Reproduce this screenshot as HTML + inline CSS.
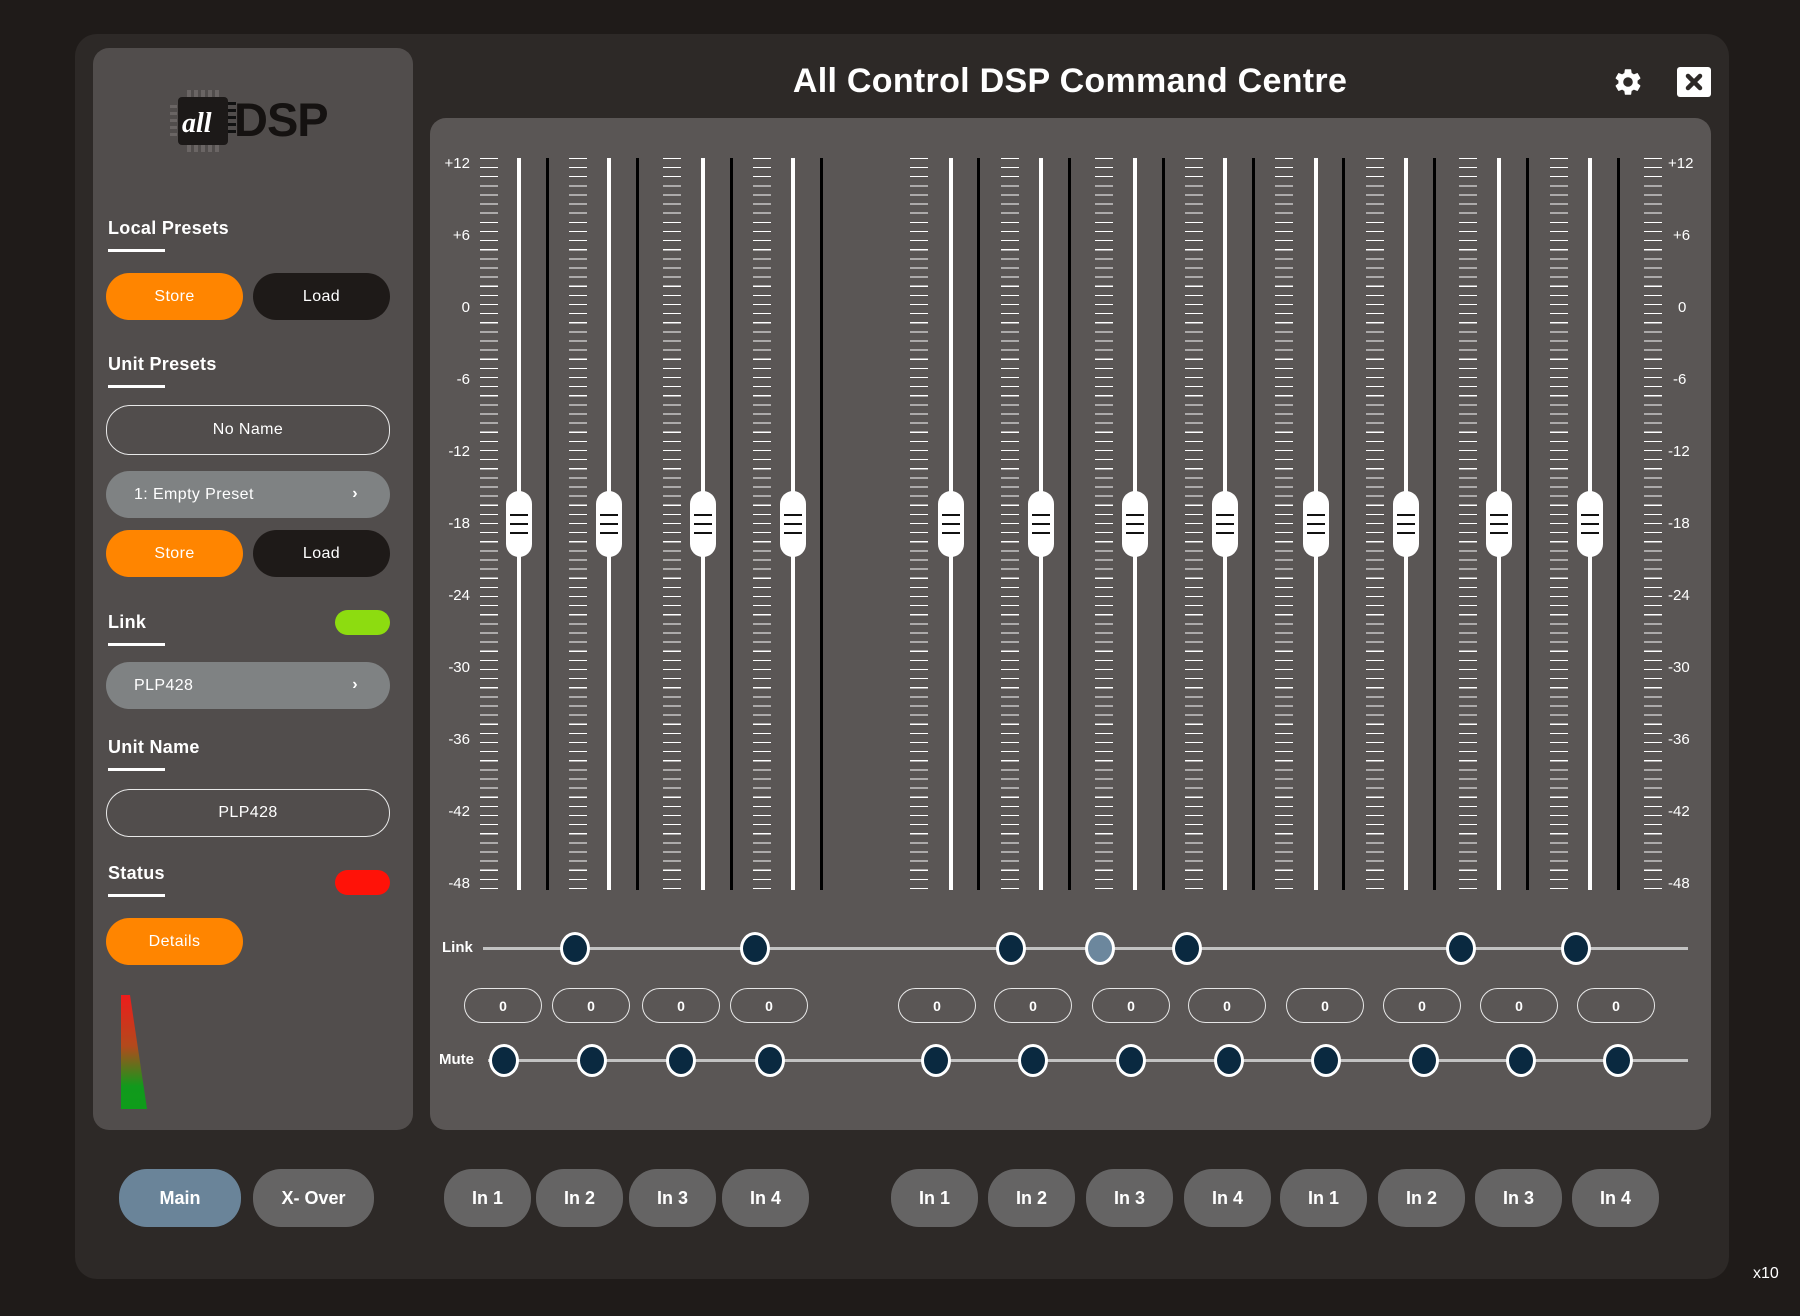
<!DOCTYPE html>
<html><head><meta charset="utf-8"><style>
*{margin:0;padding:0;box-sizing:border-box}
body{width:1800px;height:1316px;background:#1f1b19;position:relative;overflow:hidden;font-family:"Liberation Sans",sans-serif;color:#fff}
.a{position:absolute}
.frame{left:75px;top:34px;width:1654px;height:1245px;background:#2d2927;border-radius:22px}
.left{left:93px;top:48px;width:320px;height:1082px;background:#514d4c;border-radius:16px}
.main{left:430px;top:118px;width:1281px;height:1012px;background:#5a5655;border-radius:16px}
.h{left:108px;font-weight:bold;font-size:18px;letter-spacing:.3px}
.ul{left:108px;width:57px;height:3px;background:#fff}
.btn{border-radius:24px;display:flex;align-items:center;justify-content:center;font-size:16px;letter-spacing:.4px}
.or{background:#ff8500}.bk{background:#1e1a18}
.gr{background:#7f8283;justify-content:flex-start;padding-left:28px}
.ol{border:1.5px solid #e8e8e8}
.chev{position:absolute;right:32px;top:50%;transform:translateY(-55%);font-weight:bold;font-size:16px}
.tick{width:18px;height:731px;top:158px;background:repeating-linear-gradient(to bottom,#fff 0 1px,transparent 1px 9.125px)}
.wl{width:4px;background:#fff;top:158px;height:732px}
.bl{width:3px;background:#000;top:158px;height:732px}
.knob{width:26px;height:66px;top:491px;background:#fff;border-radius:13px}
.knob i{position:absolute;left:4px;width:18px;height:1.5px;background:#111}
.dot{width:30px;height:33px;border-radius:50%;background:#0a2940;border:3px solid #fff}
.pill{width:78px;height:35px;top:988px;border:1.5px solid #e6e6e6;border-radius:18px;display:flex;align-items:center;justify-content:center;font-weight:bold;font-size:14px}
.tab{top:1169px;height:58px;width:87px;border-radius:28px;background:#656464;display:flex;align-items:center;justify-content:center;font-weight:bold;font-size:18px}
</style></head><body>
<div class="a frame"></div>
<div class="a left"></div>
<div class="a main"></div>

<!-- logo -->
<svg class="a" style="left:170px;top:90px" width="80" height="62" viewBox="0 0 80 62">
 <g fill="#6a6564"><rect x="17" y="0" width="4" height="7"/><rect x="24" y="0" width="4" height="7"/><rect x="31" y="0" width="4" height="7"/><rect x="38" y="0" width="4" height="7"/><rect x="45" y="0" width="4" height="7"/>
 <rect x="17" y="55" width="4" height="7"/><rect x="24" y="55" width="4" height="7"/><rect x="31" y="55" width="4" height="7"/><rect x="38" y="55" width="4" height="7"/><rect x="45" y="55" width="4" height="7"/>
 <rect x="0" y="15" width="7" height="3"/><rect x="0" y="22" width="7" height="3"/><rect x="0" y="29" width="7" height="3"/><rect x="0" y="36" width="7" height="3"/><rect x="0" y="43" width="7" height="3"/></g>
 <rect x="8" y="7" width="50" height="48" rx="4" fill="#1c1918"/>
 <g fill="#111"><rect x="58" y="12" width="8" height="3"/><rect x="58" y="19" width="8" height="3"/><rect x="58" y="26" width="8" height="3"/><rect x="58" y="33" width="8" height="3"/><rect x="58" y="40" width="8" height="3"/></g>
 <text x="12" y="42" font-family="Liberation Serif,serif" font-style="italic" font-weight="bold" font-size="28" fill="#fff">all</text>
</svg>
<div class="a" style="left:234px;top:95px;font-size:47px;color:#151211;font-weight:bold;letter-spacing:-1px;line-height:50px">DSP</div>

<div class="a h" style="top:218px">Local Presets</div><div class="a ul" style="top:249px"></div>
<div class="a btn or" style="left:106px;top:273px;width:137px;height:47px">Store</div>
<div class="a btn bk" style="left:253px;top:273px;width:137px;height:47px">Load</div>
<div class="a h" style="top:354px">Unit Presets</div><div class="a ul" style="top:385px"></div>
<div class="a btn ol" style="left:106px;top:405px;width:284px;height:50px">No Name</div>
<div class="a btn gr" style="left:106px;top:471px;width:284px;height:47px">1: Empty Preset<span class="chev">›</span></div>
<div class="a btn or" style="left:106px;top:530px;width:137px;height:47px">Store</div>
<div class="a btn bk" style="left:253px;top:530px;width:137px;height:47px">Load</div>
<div class="a h" style="top:612px">Link</div><div class="a ul" style="top:643px"></div>
<div class="a" style="left:335px;top:610px;width:55px;height:25px;border-radius:13px;background:#8ddc10"></div>
<div class="a btn gr" style="left:106px;top:662px;width:284px;height:47px">PLP428<span class="chev">›</span></div>
<div class="a h" style="top:737px">Unit Name</div><div class="a ul" style="top:768px"></div>
<div class="a btn ol" style="left:106px;top:789px;width:284px;height:48px">PLP428</div>
<div class="a h" style="top:863px">Status</div><div class="a ul" style="top:894px"></div>
<div class="a" style="left:335px;top:870px;width:55px;height:25px;border-radius:13px;background:#ff1208"></div>
<div class="a btn or" style="left:106px;top:918px;width:137px;height:47px">Details</div>
<svg class="a" style="left:121px;top:995px" width="26" height="114"><defs><linearGradient id="g" x1="0" y1="0" x2="0" y2="1"><stop offset="0" stop-color="#ee1c1c"/><stop offset=".45" stop-color="#b24a1c"/><stop offset=".8" stop-color="#119a1c"/><stop offset="1" stop-color="#0e9c1a"/></linearGradient></defs><polygon points="0,0 9,0 26,114 0,114" fill="url(#g)"/></svg>

<!-- title -->
<div class="a" style="left:700px;top:62px;width:740px;text-align:center;font-size:34px;font-weight:bold;letter-spacing:.3px">All Control DSP Command Centre</div>
<svg class="a" style="left:1612px;top:66px" width="32" height="32" viewBox="0 0 24 24"><path fill="#fff" d="M19.14 12.94c.04-.3.06-.61.06-.94s-.02-.64-.07-.94l2.030-1.58a.49.49 0 0 0 .12-.61l-1.92-3.32a.49.49 0 0 0-.59-.22l-2.39.96a7 7 0 0 0-1.62-.94l-.36-2.54a.48.48 0 0 0-.48-.41h-3.84a.48.48 0 0 0-.47.41l-.36 2.54c-.59.24-1.13.57-1.62.94l-2.39-.96a.48.48 0 0 0-.59.22L2.74 8.87a.47.47 0 0 0 .12.61l2.03 1.58c-.05.3-.09.63-.09.94s.02.64.07.94l-2.03 1.58a.49.49 0 0 0-.12.61l1.92 3.32c.12.22.37.29.59.22l2.39-.96c.5.38 1.03.7 1.620.94l.36 2.54c.05.24.24.41.48.41h3.84c.24 0 .44-.17.47-.41l.36-2.54c.59-.24 1.13-.56 1.62-.94l2.39.96c.22.08.47 0 .59-.22l1.92-3.32a.47.47 0 0 0-.12-.61l-2.01-1.58zM12 15.6A3.6 3.6 0 1 1 12 8.4a3.6 3.6 0 0 1 0 7.2z"/></svg>
<svg class="a" style="left:1677px;top:67px" width="34" height="30" viewBox="0 0 34 30"><rect width="34" height="30" rx="3" fill="#fff"/><path d="M11 9l12 12M23 9L11 21" stroke="#2d2927" stroke-width="4.5" stroke-linecap="round"/></svg>

<!-- scales -->
<div class="a" style="left:410px;top:155px;width:60px;height:760px;font-size:15px">
 <div class="a" style="right:0;top:0">+12</div><div class="a" style="right:0;top:72px">+6</div><div class="a" style="right:0;top:144px">0</div><div class="a" style="right:0;top:216px">-6</div><div class="a" style="right:0;top:288px">-12</div><div class="a" style="right:0;top:360px">-18</div><div class="a" style="right:0;top:432px">-24</div><div class="a" style="right:0;top:504px">-30</div><div class="a" style="right:0;top:576px">-36</div><div class="a" style="right:0;top:648px">-42</div><div class="a" style="right:0;top:720px">-48</div>
</div>
<div class="a" style="left:1668px;top:155px;width:60px;height:760px;font-size:15px">
 <div class="a" style="left:0;top:0">+12</div><div class="a" style="left:5px;top:72px">+6</div><div class="a" style="left:10px;top:144px">0</div><div class="a" style="left:5px;top:216px">-6</div><div class="a" style="left:0;top:288px">-12</div><div class="a" style="left:0;top:360px">-18</div><div class="a" style="left:0;top:432px">-24</div><div class="a" style="left:0;top:504px">-30</div><div class="a" style="left:0;top:576px">-36</div><div class="a" style="left:0;top:648px">-42</div><div class="a" style="left:0;top:720px">-48</div>
</div>
<div class="a tick" style="left:1644px"></div>

<!-- channels -->
<div class="a tick" style="left:480px"></div><div class="a wl" style="left:517px"></div><div class="a bl" style="left:546px"></div><div class="a knob" style="left:506px"><i style="top:23px"></i><i style="top:32px"></i><i style="top:41px"></i></div>
<div class="a tick" style="left:569px"></div><div class="a wl" style="left:607px"></div><div class="a bl" style="left:636px"></div><div class="a knob" style="left:596px"><i style="top:23px"></i><i style="top:32px"></i><i style="top:41px"></i></div>
<div class="a tick" style="left:663px"></div><div class="a wl" style="left:701px"></div><div class="a bl" style="left:730px"></div><div class="a knob" style="left:690px"><i style="top:23px"></i><i style="top:32px"></i><i style="top:41px"></i></div>
<div class="a tick" style="left:753px"></div><div class="a wl" style="left:791px"></div><div class="a bl" style="left:820px"></div><div class="a knob" style="left:780px"><i style="top:23px"></i><i style="top:32px"></i><i style="top:41px"></i></div>

<div class="a tick" style="left:910px"></div><div class="a wl" style="left:949px"></div><div class="a bl" style="left:977px"></div><div class="a knob" style="left:938px"><i style="top:23px"></i><i style="top:32px"></i><i style="top:41px"></i></div>
<div class="a tick" style="left:1001px"></div><div class="a wl" style="left:1039px"></div><div class="a bl" style="left:1068px"></div><div class="a knob" style="left:1028px"><i style="top:23px"></i><i style="top:32px"></i><i style="top:41px"></i></div>
<div class="a tick" style="left:1095px"></div><div class="a wl" style="left:1133px"></div><div class="a bl" style="left:1162px"></div><div class="a knob" style="left:1122px"><i style="top:23px"></i><i style="top:32px"></i><i style="top:41px"></i></div>
<div class="a tick" style="left:1185px"></div><div class="a wl" style="left:1223px"></div><div class="a bl" style="left:1252px"></div><div class="a knob" style="left:1212px"><i style="top:23px"></i><i style="top:32px"></i><i style="top:41px"></i></div>
<div class="a tick" style="left:1275px"></div><div class="a wl" style="left:1314px"></div><div class="a bl" style="left:1342px"></div><div class="a knob" style="left:1303px"><i style="top:23px"></i><i style="top:32px"></i><i style="top:41px"></i></div>
<div class="a tick" style="left:1366px"></div><div class="a wl" style="left:1404px"></div><div class="a bl" style="left:1433px"></div><div class="a knob" style="left:1393px"><i style="top:23px"></i><i style="top:32px"></i><i style="top:41px"></i></div>
<div class="a tick" style="left:1459px"></div><div class="a wl" style="left:1497px"></div><div class="a bl" style="left:1526px"></div><div class="a knob" style="left:1486px"><i style="top:23px"></i><i style="top:32px"></i><i style="top:41px"></i></div>
<div class="a tick" style="left:1550px"></div><div class="a wl" style="left:1588px"></div><div class="a bl" style="left:1617px"></div><div class="a knob" style="left:1577px"><i style="top:23px"></i><i style="top:32px"></i><i style="top:41px"></i></div>

<!-- link row -->
<div class="a" style="left:442px;top:939px;font-size:15px;font-weight:bold">Link</div>
<div class="a" style="left:483px;top:947px;width:1205px;height:3px;background:#c2c2c2"></div>
<div class="a dot" style="left:560px;top:932px"></div>
<div class="a dot" style="left:740px;top:932px"></div>
<div class="a dot" style="left:996px;top:932px"></div>
<div class="a dot" style="left:1085px;top:932px;background:#6c879d"></div>
<div class="a dot" style="left:1172px;top:932px"></div>
<div class="a dot" style="left:1446px;top:932px"></div>
<div class="a dot" style="left:1561px;top:932px"></div>

<!-- pills -->
<div class="a pill" style="left:464px">0</div><div class="a pill" style="left:552px">0</div><div class="a pill" style="left:642px">0</div><div class="a pill" style="left:730px">0</div>
<div class="a pill" style="left:898px">0</div><div class="a pill" style="left:994px">0</div><div class="a pill" style="left:1092px">0</div><div class="a pill" style="left:1188px">0</div>
<div class="a pill" style="left:1286px">0</div><div class="a pill" style="left:1383px">0</div><div class="a pill" style="left:1480px">0</div><div class="a pill" style="left:1577px">0</div>

<!-- mute row -->
<div class="a" style="left:439px;top:1051px;font-size:15px;font-weight:bold">Mute</div>
<div class="a" style="left:488px;top:1059px;width:1200px;height:3px;background:#c2c2c2"></div>
<div class="a dot" style="left:489px;top:1044px"></div><div class="a dot" style="left:577px;top:1044px"></div><div class="a dot" style="left:666px;top:1044px"></div><div class="a dot" style="left:755px;top:1044px"></div>
<div class="a dot" style="left:921px;top:1044px"></div><div class="a dot" style="left:1018px;top:1044px"></div><div class="a dot" style="left:1116px;top:1044px"></div><div class="a dot" style="left:1214px;top:1044px"></div>
<div class="a dot" style="left:1311px;top:1044px"></div><div class="a dot" style="left:1409px;top:1044px"></div><div class="a dot" style="left:1506px;top:1044px"></div><div class="a dot" style="left:1603px;top:1044px"></div>

<!-- tabs -->
<div class="a tab" style="left:119px;width:122px;background:#6a8499">Main</div>
<div class="a tab" style="left:253px;width:121px">X- Over</div>
<div class="a tab" style="left:444px">In 1</div><div class="a tab" style="left:536px">In 2</div><div class="a tab" style="left:629px">In 3</div><div class="a tab" style="left:722px">In 4</div>
<div class="a tab" style="left:891px">In 1</div><div class="a tab" style="left:988px">In 2</div><div class="a tab" style="left:1086px">In 3</div><div class="a tab" style="left:1184px">In 4</div>
<div class="a tab" style="left:1280px">In 1</div><div class="a tab" style="left:1378px">In 2</div><div class="a tab" style="left:1475px">In 3</div><div class="a tab" style="left:1572px">In 4</div>

<div class="a" style="left:1753px;top:1265px;font-size:16px">x10</div>
</body></html>
